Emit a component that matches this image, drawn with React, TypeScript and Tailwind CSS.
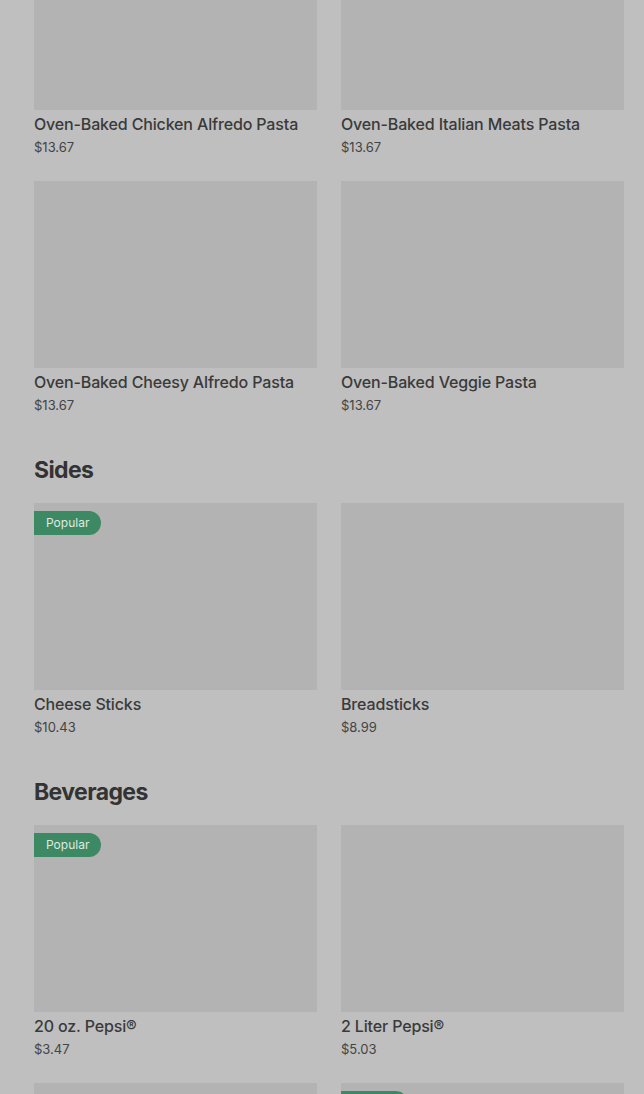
import React from "react";

type Item = { name: string; price: string; popular?: boolean };

type Section = { title?: string; items: Item[] };

const sections: Section[] = [
  {
    items: [
      { name: "Oven-Baked Chicken Alfredo Pasta", price: "$13.67" },
      { name: "Oven-Baked Italian Meats Pasta", price: "$13.67" },
      { name: "Oven-Baked Cheesy Alfredo Pasta", price: "$13.67" },
      { name: "Oven-Baked Veggie Pasta", price: "$13.67" },
    ],
  },
  {
    title: "Sides",
    items: [
      { name: "Cheese Sticks", price: "$10.43", popular: true },
      { name: "Breadsticks", price: "$8.99" },
    ],
  },
  {
    title: "Beverages",
    items: [
      { name: "20 oz. Pepsi®", price: "$3.47", popular: true },
      { name: "2 Liter Pepsi®", price: "$5.03" },
      // below the fold, only the picture tops show
      { name: "", price: "" },
      { name: "", price: "", popular: true },
    ],
  },
];

const Card = ({ item }: { item: Item }) => (
  <div className="flex flex-col">
    <div className="relative h-[187px] bg-[#b3b3b3]">
      {item.popular && (
        <span className="absolute left-0 top-2 h-6 pl-3 pr-3 flex items-center rounded-r-full bg-[#3d8963] text-[12px] text-[#dfe9e3]">
          Popular
        </span>
      )}
    </div>
    {item.name && (
      <>
        <p className="mt-[2px] text-[16px] leading-6 font-medium tracking-[-0.15px] text-[#3a3a3a]">{item.name}</p>
        <p className="mt-px text-[13px] leading-5 text-[#444444]">{item.price}</p>
      </>
    )}
  </div>
);

const App = () => {
  return (
    <div
      className="h-[1094px] overflow-hidden bg-[#bfbfbf]"
      style={{ fontFamily: "Inter, 'Noto Sans', Arial, sans-serif" }}>
      <div className="-mt-[77px] pl-[34px] pr-[20px] flex flex-col">
        {sections.map((s, i) => (
          <div key={i} className={s.title ? "mt-[39px]" : ""}>
            {s.title && <h2 className="mb-[17px] text-[23px] leading-8 font-bold tracking-[-0.6px] text-[#333333]">{s.title}</h2>}
            <div className="grid grid-cols-2 gap-x-6 gap-y-6">
              {s.items.map((it, j) => (
                <Card key={j} item={it} />
              ))}
            </div>
          </div>
        ))}
      </div>
    </div>
  );
};

export default App;
